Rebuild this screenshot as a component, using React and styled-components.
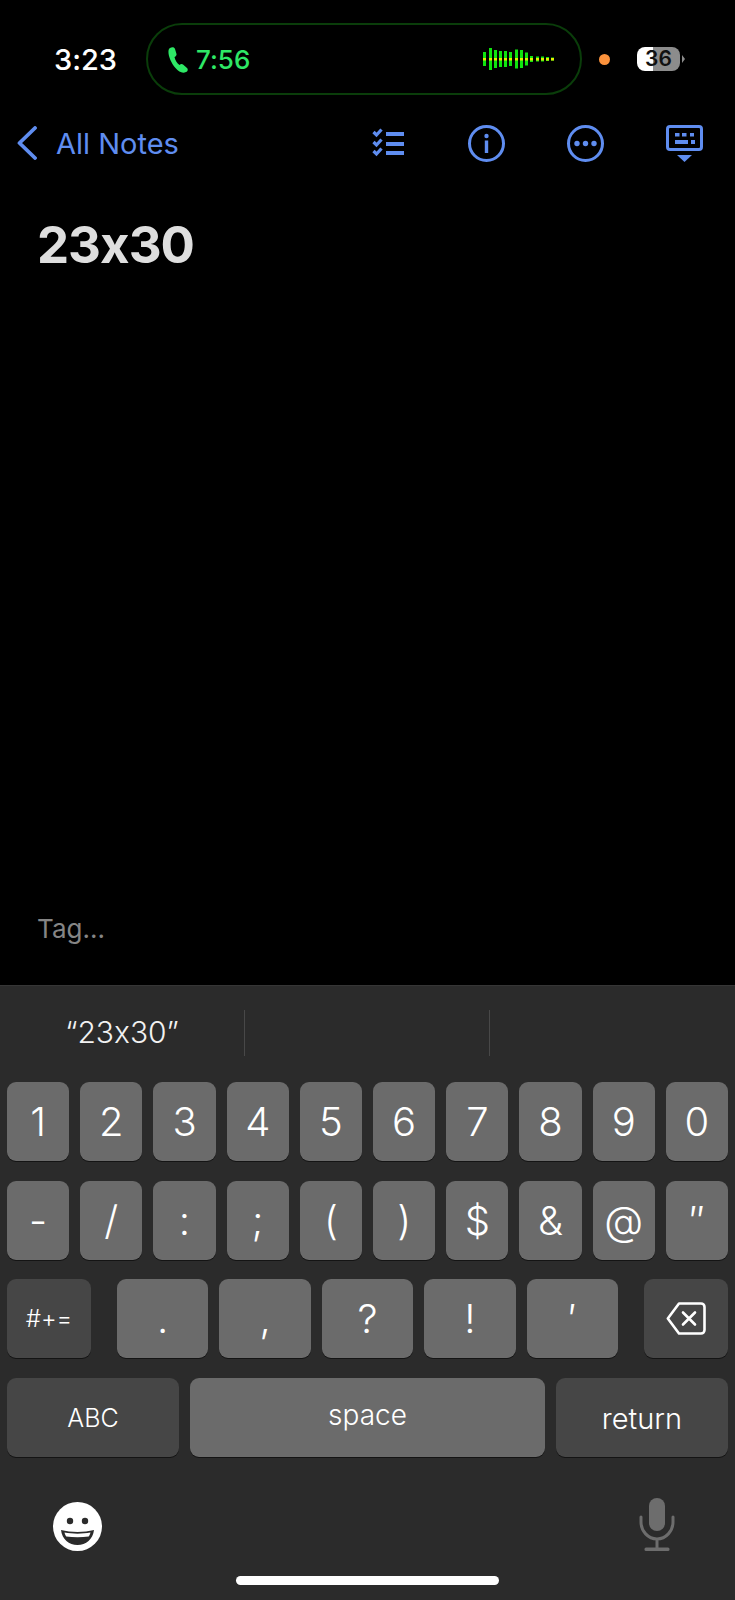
import styled, { createGlobalStyle } from "styled-components";

const GlobalStyle = createGlobalStyle`
  html, body {
    margin: 0;
    padding: 0;
    background: #000;
  }
`;

const blue = "#5f8df0";
const green = "#2ee866";

const Screen = styled.div`
  width: 735px;
  height: 1600px;
  display: flex;
  flex-direction: column;
  background: #000;
  overflow: hidden;
  font-family: Inter, "Liberation Sans", sans-serif;
  font-feature-settings: "calt" 0;
`;

const StatusBar = styled.div`
  display: flex;
  align-items: center;
  height: 72px;
  margin-top: 23px;
`;

const Clock = styled.div`
  width: 146px;
  padding-left: 54px;
  box-sizing: border-box;
  color: #fff;
  font-size: 29px;
  font-weight: 500;
  line-height: 1;
  white-space: nowrap;
`;

const CallPill = styled.div`
  width: 436px;
  height: 72px;
  box-sizing: border-box;
  display: flex;
  align-items: center;
  padding: 0 26px 0 20px;
  border: 2px solid #0a3d0a;
  border-radius: 36px;
`;

const CallTime = styled.span`
  margin-left: 8px;
  color: ${green};
  font-size: 26px;
  font-weight: 500;
`;

const Wave = styled.svg`
  margin-left: auto;
`;

const OrangeDot = styled.div`
  width: 11px;
  height: 11px;
  margin-left: 17px;
  border-radius: 50%;
  background: #fb923c;
`;

const Battery = styled.div`
  position: relative;
  width: 43px;
  height: 24px;
  margin-left: 27px;
  border-radius: 8px;
  background: linear-gradient(to right, #fff 0 37%, #8c8c8c 37% 100%);
  color: #111;
  font-size: 21px;
  font-weight: 600;
  line-height: 24px;
  text-align: center;

  &::after {
    content: "";
    position: absolute;
    left: 45px;
    top: 8px;
    border-left: 3px solid #8c8c8c;
    border-top: 4px solid transparent;
    border-bottom: 4px solid transparent;
  }
`;

const NavBar = styled.div`
  display: flex;
  align-items: center;
  height: 96px;
  padding: 0 32px 0 17px;
`;

const BackLabel = styled.span`
  margin-left: 19px;
  color: ${blue};
  font-size: 29px;
`;

const NavIcons = styled.div`
  display: flex;
  align-items: center;
  gap: 62px;
  margin-left: auto;
`;

const NoteBody = styled.div`
  flex: 1;
  display: flex;
  flex-direction: column;
  padding: 23px 37px 0;
`;

const NoteTitle = styled.h1`
  margin: 0;
  color: #dedede;
  font-size: 51px;
  font-weight: 700;
  letter-spacing: -1px;
  line-height: 62px;
`;

const TagInput = styled.div`
  margin-top: auto;
  margin-bottom: 40px;
  color: #858585;
  font-size: 26px;
  line-height: 32px;
`;

const Keyboard = styled.div`
  height: 615px;
  box-sizing: border-box;
  display: flex;
  flex-direction: column;
  border-top: 1px solid #363636;
  background: #2b2b2b;
`;

const Suggestions = styled.div`
  display: grid;
  grid-template-columns: repeat(3, 1fr);
  height: 96px;
  padding-bottom: 2px;
  box-sizing: border-box;
  align-items: center;
`;

const Suggestion = styled.div`
  height: 46px;
  display: flex;
  align-items: center;
  justify-content: center;
  padding-bottom: 2px;
  box-sizing: border-box;
  color: #f2f2f2;
  font-size: 30px;
  font-weight: 300;
  border-right: ${(p) => (p.$divider ? "1px solid #484848" : "none")};
`;

const KeyRows = styled.div`
  display: flex;
  flex-direction: column;
  gap: 19.5px;
  padding: 0 7px;
`;

const KeyRow = styled.div`
  display: flex;
  gap: ${(p) => p.$gap || 11}px;
`;

const KeyGroup = styled.div`
  flex: 1;
  display: flex;
  gap: 11px;
`;

const Key = styled.div`
  flex: ${(p) => (p.$width ? `0 0 ${p.$width}px` : "1")};
  height: 79px;
  display: flex;
  align-items: center;
  justify-content: center;
  padding-bottom: ${(p) => p.$lift || 0}px;
  padding-top: ${(p) => p.$drop || 0}px;
  box-sizing: border-box;
  border-radius: 9px;
  background: ${(p) => (p.$dark ? "#464646" : "#6b6b6b")};
  box-shadow: 0 1px 0 #141414;
  color: #fff;
  font-size: ${(p) => p.$size || 40}px;
  font-weight: 300;
`;

const BottomBar = styled.div`
  flex: 1;
  display: flex;
  align-items: flex-end;
  justify-content: space-between;
  padding: 0 60px 25px 53px;
`;

const HomeIndicator = styled.div`
  width: 263px;
  height: 9px;
  margin: 0 auto 15px;
  border-radius: 5px;
  background: #fff;
`;

const bars = [14, 22, 18, 16, 16, 14, 19, 18, 13, 6, 5, 5, 4, 3];
const barX = [1, 7, 12, 17, 22, 27, 33, 38, 43, 48, 54, 59, 64, 69];

function PhoneIcon() {
  return (
    <svg width="20" height="27" viewBox="0 0 20 27">
      <path
        fill={green}
        d="M2 2C4 .5 6.500 1 7 3l1.500 5c.3 1.500-1 2.500-2 3 .5 3 2.500 6.500 5 8 1-1 2.500-1.500 3.500-.5l4 3.500c1.500 1.500.5 3.500-1 4-3 1.500-7 .5-10.500-4C3 17 0 9 .5 5 .6 3.500 1 2.700 2 2Z"
      />
    </svg>
  );
}

function WaveForm() {
  return (
    <Wave width="72" height="24" viewBox="0 0 72 24">
      {bars.map((h, i) => (
        <g key={i}>
          <rect x={barX[i]} y={12 - h / 2} width="3" height={h} fill="#0fe30f" />
          <rect x={barX[i]} y="11" width="3" height="2.500" fill="#e3f000" />
        </g>
      ))}
    </Wave>
  );
}

function ChevronBack() {
  return (
    <svg width="20" height="34" viewBox="0 0 20 34" fill="none">
      <path d="M18 2 2.500 17 18 32" stroke={blue} strokeWidth="3.800" strokeLinecap="round" strokeLinejoin="round" />
    </svg>
  );
}

function ChecklistIcon() {
  return (
    <svg width="34" height="30" viewBox="0 0 34 30" fill="none">
      {[4, 14, 23].map((y) => (
        <g key={y}>
          <path d={`M1.500 ${y} 4.500 ${y + 3} 9.500 ${y - 2.500}`} stroke={blue} strokeWidth="3.200" />
          <rect x="14" y={y} width="18" height="4" fill={blue} />
        </g>
      ))}
    </svg>
  );
}

function InfoIcon() {
  return (
    <svg width="37" height="37" viewBox="0 0 37 37" fill="none">
      <circle cx="18.500" cy="18.500" r="17" stroke={blue} strokeWidth="3" />
      <circle cx="18.500" cy="11" r="2.200" fill={blue} />
      <rect x="16.800" y="15.500" width="3.400" height="12.500" fill={blue} />
    </svg>
  );
}

function MoreIcon() {
  return (
    <svg width="37" height="37" viewBox="0 0 37 37" fill="none">
      <circle cx="18.500" cy="18.500" r="17" stroke={blue} strokeWidth="3" />
      <circle cx="10" cy="18.500" r="2.700" fill={blue} />
      <circle cx="18.500" cy="18.500" r="2.700" fill={blue} />
      <circle cx="27" cy="18.500" r="2.700" fill={blue} />
    </svg>
  );
}

function KeyboardHideIcon() {
  return (
    <svg width="37" height="37" viewBox="0 0 37 37" fill="none">
      <rect x="1.500" y="1.500" width="34" height="23" rx="2.500" stroke={blue} strokeWidth="3" />
      <rect x="9" y="8" width="4.500" height="3.500" fill={blue} />
      <rect x="16" y="8" width="4.500" height="3.500" fill={blue} />
      <rect x="24" y="8" width="4" height="3.500" fill={blue} />
      <rect x="9" y="15" width="13" height="4" fill={blue} />
      <rect x="25" y="15" width="4" height="4" fill={blue} />
      <path d="M11 30h15l-7.500 7Z" fill={blue} />
    </svg>
  );
}

function BackspaceIcon() {
  return (
    <svg width="40" height="33" viewBox="0 0 40 33" fill="none">
      <path
        d="M13 1.500h22c2 0 3.500 1.500 3.500 3.500v23c0 2-1.500 3.500-3.500 3.500H13L1.800 16.500Z"
        stroke="#fff"
        strokeWidth="2.600"
        strokeLinejoin="round"
      />
      <path d="M17 10.500 29 22.500M29 10.500 17 22.500" stroke="#fff" strokeWidth="2.600" strokeLinecap="round" />
    </svg>
  );
}

function EmojiIcon() {
  return (
    <svg width="49" height="49" viewBox="0 0 49 49">
      <circle cx="24.500" cy="24.500" r="24.500" fill="#fff" />
      <circle cx="17" cy="19" r="3.200" fill="#2b2b2b" />
      <circle cx="32" cy="19" r="3.200" fill="#2b2b2b" />
      <path d="M8 28c10 2.500 23 2.500 33 0-1 9-8 15-16.500 15S9 37 8 28Z" fill="#2b2b2b" />
      <path d="M11.500 30.500c8 1.500 18 1.500 26 0-.5 1.800-1 3-1.800 4-7 1-15.500 1-22.400 0-.8-1-1.400-2.200-1.800-4Z" fill="#fff" />
    </svg>
  );
}

function MicIcon() {
  return (
    <svg width="36" height="53" viewBox="0 0 36 53" fill="none">
      <rect x="10" y="0" width="16" height="33" rx="8" fill="#6d6d6d" />
      <path d="M2 19v5c0 9 7 17 16 17s16-8 16-17v-5M18 41v9" stroke="#6d6d6d" strokeWidth="3" strokeLinecap="round" />
      <rect x="5.500" y="49.500" width="25" height="3.500" rx="1.500" fill="#6d6d6d" />
    </svg>
  );
}

const digits = ["1", "2", "3", "4", "5", "6", "7", "8", "9", "0"];
const symbols = ["-", "/", ":", ";", "(", ")", "$", "&", "@", "″"];
const punctuation = [".", ",", "?", "!", "′"];

export default function App() {
  return (
    <Screen>
      <GlobalStyle />
      <StatusBar>
        <Clock>3:23</Clock>
        <CallPill>
          <PhoneIcon />
          <CallTime>7:56</CallTime>
          <WaveForm />
        </CallPill>
        <OrangeDot />
        <Battery>36</Battery>
      </StatusBar>
      <NavBar>
        <ChevronBack />
        <BackLabel>All Notes</BackLabel>
        <NavIcons>
          <ChecklistIcon />
          <InfoIcon />
          <MoreIcon />
          <KeyboardHideIcon />
        </NavIcons>
      </NavBar>
      <NoteBody>
        <NoteTitle>23x30</NoteTitle>
        <TagInput>Tag...</TagInput>
      </NoteBody>
      <Keyboard>
        <Suggestions>
          <Suggestion $divider>“23x30”</Suggestion>
          <Suggestion $divider />
          <Suggestion />
        </Suggestions>
        <KeyRows>
          <KeyRow>
            {digits.map((d) => (
              <Key key={d}>{d}</Key>
            ))}
          </KeyRow>
          <KeyRow>
            {symbols.map((s) => (
              <Key key={s}>{s}</Key>
            ))}
          </KeyRow>
          <KeyRow $gap={26}>
            <Key $dark $width={84} $size={24}>#+=</Key>
            <KeyGroup>
              {punctuation.map((s) => (
                <Key key={s}>{s}</Key>
              ))}
            </KeyGroup>
            <Key $dark $width={84}>
              <BackspaceIcon />
            </Key>
          </KeyRow>
          <KeyRow>
            <Key $dark $width={172} $size={25} $drop={2}>ABC</Key>
            <Key $size={28} $lift={4}>space</Key>
            <Key $dark $width={172} $size={29} $drop={2}>return</Key>
          </KeyRow>
        </KeyRows>
        <BottomBar>
          <EmojiIcon />
          <MicIcon />
        </BottomBar>
        <HomeIndicator />
      </Keyboard>
    </Screen>
  );
}
